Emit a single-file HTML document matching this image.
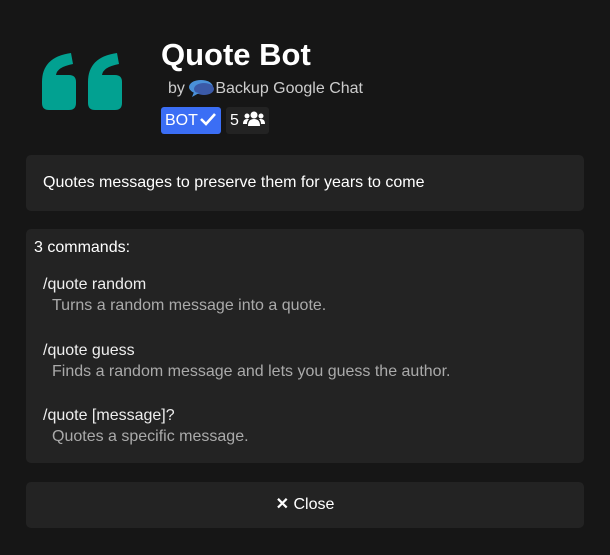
<!DOCTYPE html>
<html><head><style>
body{margin:0;width:610px;height:555px;background:#161616;font-family:"Liberation Sans",sans-serif;color:#fff;position:relative;overflow:hidden}
.a{position:absolute}
.box{position:absolute;left:26px;width:558px;background:#232323;border-radius:5px}
.cmd{font-size:16px;color:#eee;line-height:21px}
.desc{font-size:16px;color:#aaa;padding-left:9px;line-height:21px}
</style></head><body>
<svg class="a" style="left:42px;top:53px" width="81" height="58" viewBox="0 0 81 58">
<path d="M0 29 Q0 4 29 0 L31 11 Q15 14 14 22 L27 22 Q34 22 34 29 L34 50 Q34 57 27 57 L7 57 Q0 57 0 50 Z" fill="#02a191"/>
<path d="M46 29 Q46 4 75 0 L77 11 Q61 14 60 22 L73 22 Q80 22 80 29 L80 50 Q80 57 73 57 L53 57 Q46 57 46 50 Z" fill="#02a191"/>
</svg>
<div class="a" style="left:161px;top:37px;font-size:31px;font-weight:bold">Quote Bot</div>
<div class="a" style="left:168px;top:79px;font-size:16px;color:#ccc">by <svg width="26" height="18" viewBox="0 0 26 18" style="vertical-align:-4px"><ellipse cx="12" cy="8" rx="12" ry="7" fill="#4a90d9"/><ellipse cx="15" cy="10" rx="10" ry="6" fill="#3b5aa8"/><path d="M5 13 L3 18 L10 14Z" fill="#4a90d9"/></svg>Backup Google Chat</div>
<div class="a" style="left:161px;top:107px;width:60px;height:27px;background:#3b6ef5;border-radius:3px;font-size:16px;line-height:27px;padding-left:4px;box-sizing:border-box">BOT<svg width="18" height="14" viewBox="0 0 18 14" style="vertical-align:-1px;margin-left:1px"><path d="M2 7 L7 12 L16 2" stroke="#fff" stroke-width="2.6" fill="none"/></svg></div>
<div class="a" style="left:226px;top:107px;width:43px;height:27px;background:#232323;border-radius:3px;font-size:16px;line-height:27px;padding-left:4px;box-sizing:border-box">5 <svg width="22" height="16" viewBox="0 0 22 16" style="vertical-align:-2px"><circle cx="11" cy="4" r="3.5" fill="#fff"/><path d="M5 15 Q5 8 11 8 Q17 8 17 15Z" fill="#fff"/><circle cx="4" cy="5" r="2.5" fill="#fff"/><circle cx="18" cy="5" r="2.5" fill="#fff"/><path d="M0 13 Q0 8 4 8 L6 8 Q4 10 4 13Z M22 13 Q22 8 18 8 L16 8 Q18 10 18 13Z" fill="#fff"/></svg></div>
<div class="box" style="top:155px;height:56px"><div class="a" style="left:17px;top:19px;font-size:16px">Quotes messages to preserve them for years to come</div></div>
<div class="box" style="top:229px;height:234px">
<div class="a" style="left:8px;top:10px;font-size:16px">3 commands:</div>
<div class="a" style="left:17px;top:45px"><div class="cmd">/quote random</div><div class="desc">Turns a random message into a quote.</div></div>
<div class="a" style="left:17px;top:111px"><div class="cmd">/quote guess</div><div class="desc">Finds a random message and lets you guess the author.</div></div>
<div class="a" style="left:17px;top:176px"><div class="cmd">/quote [message]?</div><div class="desc">Quotes a specific message.</div></div>
</div>
<div class="box" style="top:482px;height:46px;text-align:center;line-height:46px;font-size:16px"><b>✕</b> Close</div>
</body></html>
